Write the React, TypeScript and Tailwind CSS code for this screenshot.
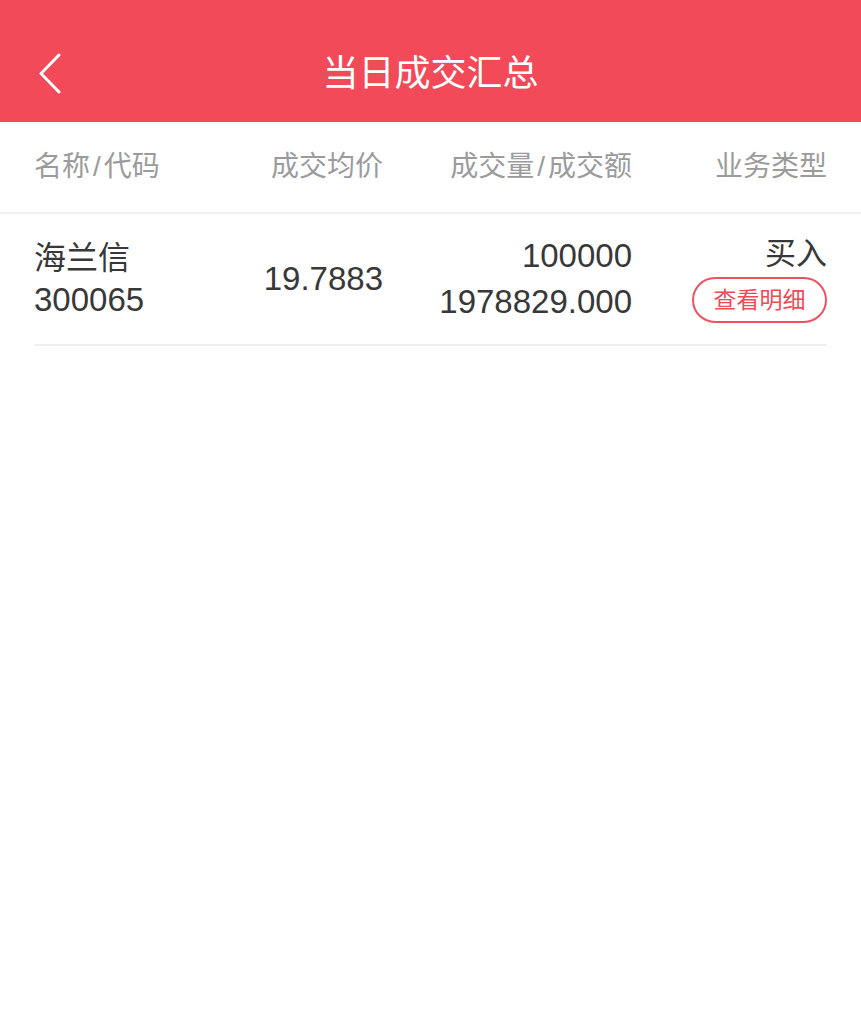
const cjk = { fontFamily: '"Liberation Sans", "Noto Sans CJK SC", sans-serif' };

function BackIcon() {
  return (
    <svg width="26" height="42" viewBox="0 0 26 42" fill="none" className="absolute left-[38px] top-[53px]">
      <polyline points="21,2 3,20.5 21,39" stroke="#fff" strokeWidth="3" strokeLinecap="round" strokeLinejoin="round" />
    </svg>
  );
}

function Slash() {
  return <span className="mx-[3px]">/</span>;
}

export default function App() {
  return (
    <div className="w-[861px] h-[1024px] bg-white" style={cjk}>
      <div className="relative h-[122px] bg-[#f24a59] flex items-center justify-center">
        <BackIcon />
        <span className="text-white text-[36px] mt-[25px]">当日成交汇总</span>
      </div>

      <div className="h-[92px] border-b-2 border-[#f0f0f0] px-[34px] grid grid-cols-[200px_149px_249px_195px] items-center text-[28px] text-[#9b9b9b]">
        <span>名称<Slash />代码</span>
        <span className="text-right">成交均价</span>
        <span className="text-right">成交量<Slash />成交额</span>
        <span className="text-right">业务类型</span>
      </div>

      <div className="px-[34px]">
        <div className="h-[132px] border-b-2 border-[#efefef] grid grid-cols-[200px_149px_249px_195px] items-center text-[#383838]">
          <div className="flex flex-col">
            <span className="text-[32px] leading-[42px]">海兰信</span>
            <span className="text-[33px] leading-[42px]">300065</span>
          </div>
          <span className="text-right text-[33px]">19.7883</span>
          <div className="flex flex-col items-end">
            <span className="text-[33px] leading-[46px]">100000</span>
            <span className="text-[33px] leading-[46px]">1978829.000</span>
          </div>
          <div className="flex flex-col items-end">
            <span className="text-[31px] leading-[38px] mb-[4px]">买入</span>
            <span className="h-[46px] w-[135px] rounded-full border-2 border-[#ef5260] text-[#ef4a58] text-[23px] flex items-center justify-center">查看明细</span>
          </div>
        </div>
      </div>
    </div>
  );
}
